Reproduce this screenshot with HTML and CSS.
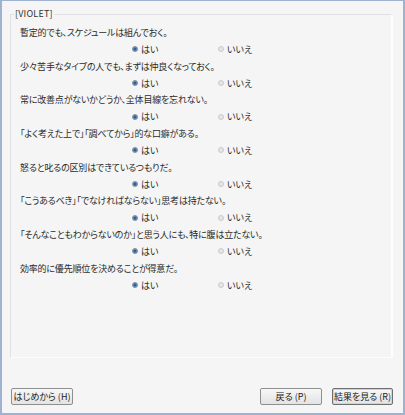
FILE: index.html
```html
<!DOCTYPE html>
<html lang="ja">
<head>
<meta charset="utf-8">
<link rel="stylesheet" href="styles.css">
</head>
<body>
<div class="window">
  <fieldset class="panel">
    <legend class="legend">[VIOLET]</legend>
    <div class="list">
      <div class="q">
        <p class="qt">暫定的でも、スケジュールは組んでおく。</p>
        <div class="opts"><span class="opt"><span class="radio on"></span>はい</span><span class="opt"><span class="radio"></span>いいえ</span></div>
      </div>
      <div class="q">
        <p class="qt">少々苦手なタイプの人でも、まずは仲良くなっておく。</p>
        <div class="opts"><span class="opt"><span class="radio on"></span>はい</span><span class="opt"><span class="radio"></span>いいえ</span></div>
      </div>
      <div class="q">
        <p class="qt">常に改善点がないかどうか、全体目線を忘れない。</p>
        <div class="opts"><span class="opt"><span class="radio on"></span>はい</span><span class="opt"><span class="radio"></span>いいえ</span></div>
      </div>
      <div class="q">
        <p class="qt">「よく考えた上で」「調べてから」的な口癖がある。</p>
        <div class="opts"><span class="opt"><span class="radio on"></span>はい</span><span class="opt"><span class="radio"></span>いいえ</span></div>
      </div>
      <div class="q">
        <p class="qt">怒ると叱るの区別はできているつもりだ。</p>
        <div class="opts"><span class="opt"><span class="radio on"></span>はい</span><span class="opt"><span class="radio"></span>いいえ</span></div>
      </div>
      <div class="q">
        <p class="qt">「こうあるべき」「でなければならない」思考は持たない。</p>
        <div class="opts"><span class="opt"><span class="radio on"></span>はい</span><span class="opt"><span class="radio"></span>いいえ</span></div>
      </div>
      <div class="q">
        <p class="qt">「そんなこともわからないのか」と思う人にも、特に腹は立たない。</p>
        <div class="opts"><span class="opt"><span class="radio on"></span>はい</span><span class="opt"><span class="radio"></span>いいえ</span></div>
      </div>
      <div class="q">
        <p class="qt">効率的に優先順位を決めることが得意だ。</p>
        <div class="opts"><span class="opt"><span class="radio on"></span>はい</span><span class="opt"><span class="radio"></span>いいえ</span></div>
      </div>
    </div>
  </fieldset>
  <div class="buttons">
    <button class="btn" type="button">はじめから (H)</button>
    <div class="right">
      <button class="btn" type="button">戻る (P)</button>
      <button class="btn default" type="button">結果を見る (R)</button>
    </div>
  </div>
</div>
</body>
</html>
```
FILE: styles.css
```css
* { box-sizing: border-box; }
html, body { margin: 0; padding: 0; }
body {
  width: 405px;
  height: 415px;
  background: #f4f5f4;
  font-family: "Noto Sans CJK JP", "Noto Sans", sans-serif;
  font-feature-settings: "palt";
  color: #2a2a2a;
}
.window {
  width: 405px;
  height: 415px;
  border-style: solid;
  border-color: #9fb3d1;
  border-width: 1px 2px 2px 2px;
  background: #f4f5f4;
  display: flex;
  flex-direction: column;
}
.panel {
  margin: 7px 10px 0 8px;
  padding: 0;
  height: 350px;
  border: 1px solid #dfe1e2;
  border-right: 2px solid #fdfdfd;
  border-bottom-color: #fdfdfd;
  min-width: 0;
}
.legend {
  margin-left: 3px;
  padding: 0 1px;
  font-size: 9px;
  line-height: 12px;
  color: #333;
  letter-spacing: 0.2px;
}
.list {
  padding: 4px 0 0 9px;
}
.q {
  display: flex;
  flex-direction: column;
}
.qt {
  margin: 0;
  height: 17px;
  line-height: 17px;
  font-size: 9px;
  letter-spacing: -0.2px;
  white-space: nowrap;
}
.opts {
  height: 16.7px;
  display: flex;
  align-items: center;
  padding-left: 112px;
  font-size: 9px;
}
.opt {
  display: inline-flex;
  align-items: center;
  gap: 3px;
  width: 86px;
}
.radio {
  width: 6px;
  height: 6px;
  border-radius: 50%;
  background: #e4e6e6;
  border: 1px solid #c9cccc;
}
.radio.on {
  background: #2e5f9a;
  border: 1px solid #8f9aa6;
  box-shadow: inset 0 0 0 0.5px #6e95c3;
}
.buttons {
  margin-top: 30px;
  padding: 0 10px 0 9px;
  display: flex;
  justify-content: space-between;
}
.right {
  display: flex;
  gap: 10px;
}
.btn {
  width: 62px;
  height: 17px;
  padding: 0;
  font-family: "Noto Sans CJK JP", "Noto Sans", sans-serif;
  font-feature-settings: "palt";
  font-size: 9px;
  line-height: 15px;
  color: #222;
  background: linear-gradient(#f7f7f7, #e3e3e3);
  border: 1px solid #8e8f8f;
  border-radius: 2px;
}
.btn.default {
  width: 61px;
  border-color: #6d6f70;
  box-shadow: inset 0 0 0 1px #cfd3d6;
}
```
